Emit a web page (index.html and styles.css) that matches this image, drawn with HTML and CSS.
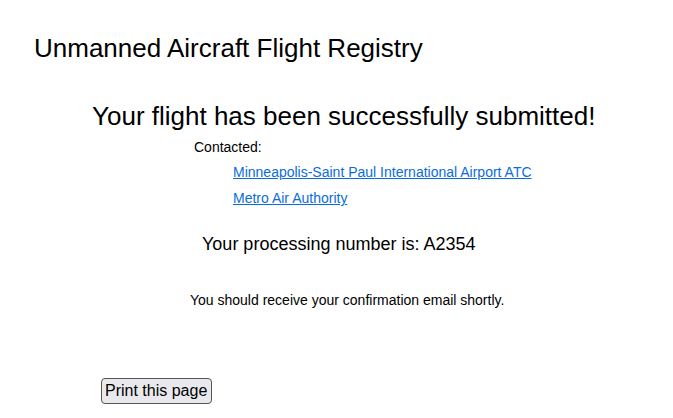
FILE: index.html
```html
<!DOCTYPE html>
<html>
<head>
<meta charset="utf-8">
<link rel="stylesheet" href="styles.css">
</head>
<body>
<div class="page">
  <h1 class="app-title">Unmanned Aircraft Flight Registry</h1>
  <h2 class="success">Your flight has been successfully submitted!</h2>
  <div class="contacted">
    <div class="contacted-label">Contacted:</div>
    <ul class="contact-list">
      <li><a href="#">Minneapolis-Saint Paul International Airport ATC</a></li>
      <li><a href="#">Metro Air Authority</a></li>
    </ul>
  </div>
  <p class="processing">Your processing number is: A2354</p>
  <p class="email-note">You should receive your confirmation email shortly.</p>
  <div class="actions">
    <button class="print-btn">Print this page</button>
  </div>
</div>
</body>
</html>
```

FILE: styles.css
```css
* { box-sizing: border-box; }
html, body { margin: 0; padding: 0; background: #fff; }
body {
  font-family: "Liberation Sans", Arial, sans-serif;
  color: #000;
}
.page {
  width: 673px;
  padding: 32px 0 0 34px;
}
.app-title {
  font-size: 26px;
  font-weight: normal;
  margin: 0;
  line-height: 32px;
}
.success {
  font-size: 26px;
  font-weight: normal;
  margin: 36px 0 0 58px;
  line-height: 32px;
}
.contacted {
  margin: 6px 0 0 160px;
}
.contacted-label {
  font-size: 14px;
  line-height: 18px;
}
.contact-list {
  list-style: none;
  margin: 3px 0 0 39px;
  padding: 0;
}
.contact-list li {
  font-size: 14px;
  line-height: 26px;
}
.contact-list a {
  color: #0a6ddb;
  text-decoration: underline;
}
.processing {
  font-size: 18px;
  margin: 22px 0 0 168px;
  line-height: 22px;
}
.email-note {
  font-size: 14px;
  margin: 37px 0 0 156px;
  line-height: 17px;
}
.actions {
  margin: 69px 0 0 67px;
}
.print-btn {
  font-family: "Liberation Sans", Arial, sans-serif;
  font-size: 16px;
  color: #000;
  background: #e9e9ed;
  border: 1px solid #555;
  border-radius: 4px;
  padding: 2px 4px 2px 3px;
  line-height: 20px;
}
```
